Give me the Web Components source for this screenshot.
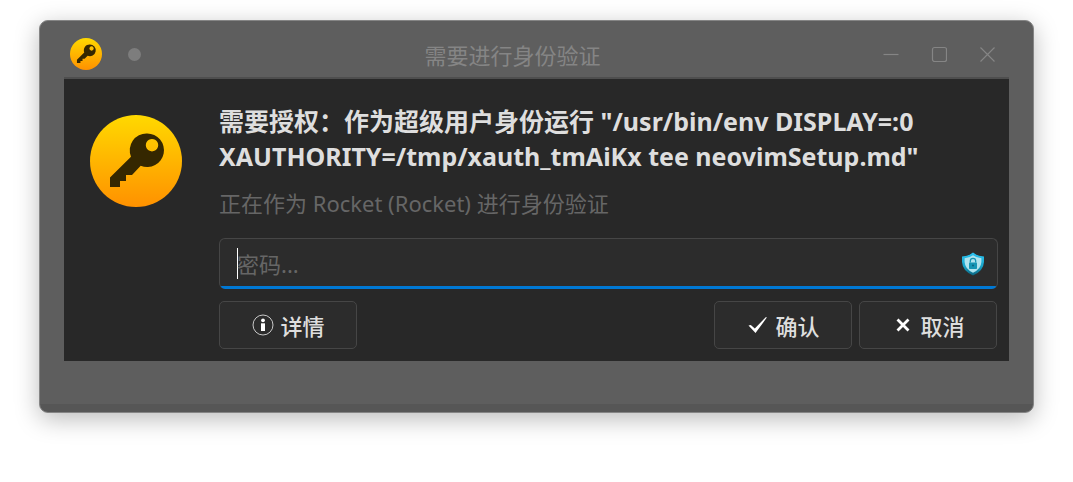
<!DOCTYPE html>
<html lang="zh-CN">
<head>
<meta charset="utf-8">
<meta name="viewport" content="width=device-width, initial-scale=1">
<title>需要进行身份验证</title>
<style>
  body { margin: 0; background: #fff; font: 22px/30px "Noto Sans", "Noto Sans CJK SC", sans-serif; }
</style>
</head>
<body>
<dialog-window caption="需要进行身份验证">
  <auth-prompt></auth-prompt>
</dialog-window>

<script>
class KeyBadge extends HTMLElement {
  constructor() {
    super();
    this.attachShadow({ mode: 'open' }).innerHTML = `
      <style>
        :host { display: block; width: var(--badge-size, 92px); height: var(--badge-size, 92px); flex: none; }
        svg { display: block; width: 100%; height: 100%; }
      </style>
      <svg viewBox="0 0 92 92" aria-hidden="true">
        <defs><linearGradient id="g" x1="0" y1="0" x2="0" y2="1">
          <stop offset="0" stop-color="#ffd900"/><stop offset="1" stop-color="#ff9100"/>
        </linearGradient></defs>
        <circle cx="46" cy="46" r="46" fill="url(#g)"/>
        <path fill="#352700" fill-rule="evenodd" d="M57 18.500a16.800 16.800 0 1 1-6.300 32.300L42 60h-6v6h-6v6H20V62.500L41 41.700A16.800 16.800 0 0 1 57 18.500zM62 24a6.200 6.200 0 1 0 0.010 0z"/>
      </svg>`;
  }
}
customElements.define('key-badge', KeyBadge);

class DialogWindow extends HTMLElement {
  constructor() {
    super();
    this.attachShadow({ mode: 'open' }).innerHTML = `
      <style>
        :host { display: block; padding: 20px 39px 69px; overflow: hidden; }
        .frame {
          box-sizing: border-box; border: 1px solid #858585; border-radius: 9px; padding: 0 24px;
          background: linear-gradient(#565656, #565656) bottom / 100% 8px no-repeat #5e5e5e;
          box-shadow: 0 6px 24px rgba(0, 0, 0, .27);
        }
        header {
          display: grid; grid-template-columns: 1fr auto 1fr; align-items: center;
          height: 56px; color: #858585;
        }
        .left { display: flex; align-items: center; gap: 26px; padding: 10px 0 0 6px; --badge-size: 32px; }
        .dot { width: 13px; height: 13px; border-radius: 50%; background: #7d7d7d; }
        h1 { margin: 0; padding: 12px 48px 0 0; font: inherit; }
        .controls { display: flex; justify-content: flex-end; gap: 32px; padding: 10px 14px 0 0; }
        button { display: block; width: 16px; height: 16px; border: 0; padding: 0; background: none; color: #858585; }
        svg { display: block; fill: none; stroke: currentColor; stroke-width: 1.200; }
        .body { border-top: 2px solid #4e4e4e; background: #282828; margin-bottom: 51px; }
      </style>
      <section class="frame">
        <header>
          <div class="left"><key-badge></key-badge><span class="dot"></span></div>
          <h1></h1>
          <div class="controls">
            <button aria-label="最小化"><svg width="16" height="16"><path d="M.5 8.500h15"/></svg></button>
            <button aria-label="最大化"><svg width="16" height="16"><rect x="1.500" y="1.500" width="14" height="14" rx="2"/></svg></button>
            <button aria-label="关闭"><svg width="16" height="16"><path d="M1.500 1.500l14 14m0-14l-14 14"/></svg></button>
          </div>
        </header>
        <div class="body"><slot></slot></div>
      </section>`;
  }
  connectedCallback() {
    this.shadowRoot.querySelector('h1').textContent = this.getAttribute('caption');
  }
}
customElements.define('dialog-window', DialogWindow);

class PushButton extends HTMLElement {
  constructor() {
    super();
    this.attachShadow({ mode: 'open' }).innerHTML = `
      <style>
        :host { display: block; }
        button {
          display: flex; align-items: center; justify-content: center; gap: 6px;
          box-sizing: border-box; width: 138px; height: 48px; padding: 0 0 0 1px;
          border: 1px solid #464646; border-radius: 5px; background: #2c2c2c;
          color: #dedede; font: inherit; font-weight: 500;
          font-family: "Noto Sans CJK SC Medium", "Noto Sans CJK SC", sans-serif;
        }
      </style>
      <button type="button"><slot name="icon"></slot><slot></slot></button>`;
  }
}
customElements.define('push-button', PushButton);

class PasswordField extends HTMLElement {
  constructor() {
    super();
    this.attachShadow({ mode: 'open' }).innerHTML = `
      <style>
        :host { display: block; }
        .box {
          position: relative; display: flex; align-items: center; box-sizing: border-box; height: 51px;
          padding: 0 13px 1px 17px; border: 1px solid #464646; border-bottom: 0; border-radius: 6px;
          background: #2c2c2c; overflow: hidden;
        }
        .box::after { content: ""; position: absolute; left: -1px; right: -1px; bottom: 0; height: 3px; background: #0078d4; }
        .caret { width: 1px; height: 31px; margin-right: -1px; background: #fff; }
        input {
          flex: 1; min-width: 0; box-sizing: border-box; height: 48px; padding: 0; border: 0;
          background: none; outline: 0; color: #dedede; font: inherit;
        }
        input::placeholder { color: #666; opacity: 1; }
        svg { display: block; flex: none; }
      </style>
      <div class="box">
        <span class="caret"></span>
        <input type="password" placeholder="密码..." aria-label="密码">
        <svg width="22" height="24" viewBox="0 0 22 24" aria-hidden="true">
          <defs><linearGradient id="s" x1="0" y1="0" x2="0" y2="1">
            <stop offset="0" stop-color="#2bc3f2"/><stop offset=".6" stop-color="#19a4c9"/><stop offset="1" stop-color="#0b627c"/>
          </linearGradient></defs>
          <path fill="url(#s)" d="M11 0.500Q15 4 22 4.500V10Q21.500 19 11 23.500Q0.500 19 0 10V4.500Q7 4 11 0.500z"/>
          <path fill="#aee3ee" d="M11 3.300Q14.500 6 19.400 6.300V10Q19 17 11 20.700Q3 17 2.600 10V6.300Q7.500 6 11 3.300z"/>
          <rect x="7" y="10.500" width="8" height="6.500" rx=".7" fill="#1495b5"/>
          <path fill="none" stroke="#1495b5" stroke-width="1.300" d="M8.300 10.500V9a2.700 2.700 0 0 1 5.400 0v1.500"/>
          <circle cx="11" cy="13.500" r="1" fill="#086580"/>
        </svg>
      </div>`;
  }
}
customElements.define('password-field', PasswordField);

class AuthPrompt extends HTMLElement {
  constructor() {
    super();
    this.attachShadow({ mode: 'open' }).innerHTML = `
      <style>
        :host { display: flex; align-items: flex-start; gap: 37px; padding: 25px 11px 12px 26px; }
        key-badge { margin-top: 11px; }
        .content { flex: 1; min-width: 0; }
        h2 { margin: 0; color: #dedede; font-size: 25px; line-height: 35px; font-weight: 700; }
        p { margin: 14px 0 20px; color: #666; }
        .actions { display: flex; gap: 7px; margin: 12px 1px 0 0; }
        .actions > :first-child { margin-right: auto; }
        svg { display: block; }
      </style>
      <key-badge></key-badge>
      <div class="content">
        <h2>需要授权：作为超级用户身份运行 "/usr/bin/env DISPLAY=:0 XAUTHORITY=/tmp/xauth_tmAiKx tee neovimSetup.md"</h2>
        <p>正在作为 Rocket (Rocket) 进行身份验证</p>
        <password-field></password-field>
        <div class="actions">
          <push-button>
            <svg slot="icon" width="22" height="22" viewBox="0 0 22 22" aria-hidden="true"><circle cx="11" cy="11" r="10" fill="none" stroke="#c8c8c8" stroke-width="1"/><circle cx="11" cy="6.300" r="1.900" fill="#fff"/><path fill="#fff" d="M9 9.300h4V17H9z"/></svg>详情</push-button>
          <push-button>
            <svg slot="icon" width="22" height="22" viewBox="0 0 22 22" aria-hidden="true"><path fill="#fff" d="M1.500 11.500l2.300-.5 4 3.500L19 3l.8.6L8.500 19z"/></svg>确认</push-button>
          <push-button>
            <svg slot="icon" width="22" height="22" viewBox="0 0 22 22" aria-hidden="true"><path fill="none" stroke="#fff" stroke-width="2.800" d="M5.500 5.500l11 11m0-11l-11 11"/></svg>取消</push-button>
        </div>
      </div>`;
  }
}
customElements.define('auth-prompt', AuthPrompt);
</script>
</body>
</html>
